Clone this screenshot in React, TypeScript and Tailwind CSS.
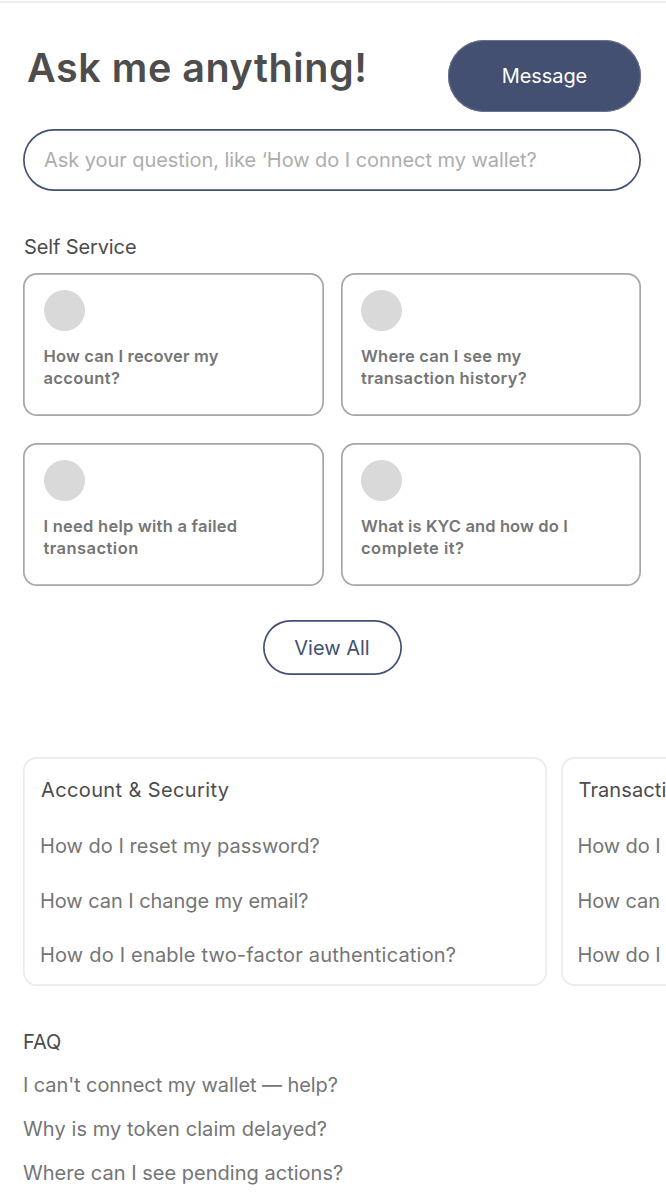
import React from "react";

const services = [
  { lines: ["How can I recover my", "account?"], tracking: ["tracking-[0.17px]", "tracking-[0.38px]"] },
  { lines: ["Where can I see my", "transaction history?"], tracking: ["tracking-[0.25px]", "tracking-[0.35px]"] },
  { lines: ["I need help with a failed", "transaction"], tracking: ["tracking-[0.25px]", "tracking-[0.45px]"] },
  { lines: ["What is KYC and how do I", "complete it?"], tracking: ["tracking-[0.12px]", "tracking-[0.5px]"] },
];

const topics = [
  {
    title: "Account & Security",
    titleTracking: "tracking-[0.38px]",
    items: [
      { text: "How do I reset my password?", tracking: "tracking-[0.02px]" },
      { text: "How can I change my email?", tracking: "tracking-[-0.06px]" },
      { text: "How do I enable two-factor authentication?", tracking: "tracking-[0.19px]" },
    ],
  },
  {
    title: "Transactions",
    titleTracking: "tracking-[0.1px]",
    items: [
      { text: "How do I", tracking: "tracking-[-0.1px]" },
      { text: "How can", tracking: "tracking-[-0.1px]" },
      { text: "How do I", tracking: "tracking-[-0.1px]" },
    ],
  },
];

const faqs = [
  { text: "I can't connect my wallet — help?", tracking: "tracking-[-0.09px]" },
  { text: "Why is my token claim delayed?", tracking: "tracking-[0.09px]" },
  { text: "Where can I see pending actions?", tracking: "tracking-[0.02px]" },
];

export default function App() {
  return (
    <main className="h-[1197px] w-[666px] overflow-hidden bg-white pt-px font-['Inter',sans-serif] text-[20px] text-[#757575]">
      <div className="h-0.5 bg-[#ebeef5]" />
      <header className="flex justify-between pt-[37px] pr-[25px] pl-[27px]">
        <h1 className="pt-[4px] text-[39.5px] leading-[48px] font-[570] tracking-[0.55px] whitespace-nowrap text-[#4d4d4d]">Ask me anything!</h1>
        <button className="flex h-[72px] w-[193px] items-center justify-center rounded-full bg-[#435071] tracking-[-0.1px] text-white ring-1 ring-[#6b7490] ring-inset">
          Message
        </button>
      </header>
      <div className="mt-[17px] mr-[25px] ml-[23px] flex h-[62px] items-center rounded-full pl-[21px] tracking-[-0.06px] whitespace-nowrap text-[#adadad] ring-[1.7px] ring-[#435071] ring-inset">
        Ask your question, like ‘How do I connect my wallet?
      </div>
      <section className="pt-[41px] pr-[25px] pl-[23px]">
        <h2 className="pl-px leading-[30px] tracking-[-0.12px] text-[#4b4b4b]">Self Service</h2>
        <div className="mt-[11px] grid grid-cols-2 gap-x-[17px] gap-y-[27px]">
          {services.map((s) => (
            <button key={s.lines[0]} className="flex h-[143px] flex-col items-start rounded-[14px] pt-[17px] pl-[20.5px] text-left text-[16.5px] leading-[22px] font-[560] text-[#757575] ring-[1.7px] ring-[#a6a6a6] ring-inset">
              <span className="mb-[14px] size-[41px] rounded-full bg-[#d9d9d9]" />
              {s.lines.map((l, i) => (
                <span key={l} className={`block whitespace-nowrap ${s.tracking[i]}`}>{l}</span>
              ))}
            </button>
          ))}
        </div>
        <div className="mt-[34px] flex justify-center">
          <button className="flex h-[55px] w-[139px] items-center justify-center rounded-full text-[#435071] ring-[1.7px] ring-[#435071] ring-inset">
            View All
          </button>
        </div>
      </section>
      <section className="mt-[82px] flex gap-[14px] overflow-hidden pl-[23px]">
        {topics.map((t) => (
          <article key={t.title} className="h-[229px] w-[523.5px] shrink-0 rounded-[14px] pt-[18px] pl-[17px] ring-[1.7px] ring-[#ebebeb] ring-inset">
            <h2 className={`pl-px leading-[30px] font-[440] whitespace-nowrap text-[#4b4b4b] ${t.titleTracking}`}>{t.title}</h2>
            <ul className="mt-[26px] flex flex-col gap-[24.5px] leading-[30px]">
              {t.items.map((q, i) => (
                <li key={i} className={`whitespace-nowrap ${q.tracking}`}>{q.text}</li>
              ))}
            </ul>
          </article>
        ))}
      </section>
      <section className="pt-[41px] pl-[23px]">
        <h2 className="leading-[30px] font-[440] text-[#4b4b4b]">FAQ</h2>
        <ul className="mt-[13px] flex flex-col gap-[14.2px] leading-[30px]">
          {faqs.map((q) => (
            <li key={q.text} className={`whitespace-nowrap ${q.tracking}`}>{q.text}</li>
          ))}
        </ul>
      </section>
    </main>
  );
}
